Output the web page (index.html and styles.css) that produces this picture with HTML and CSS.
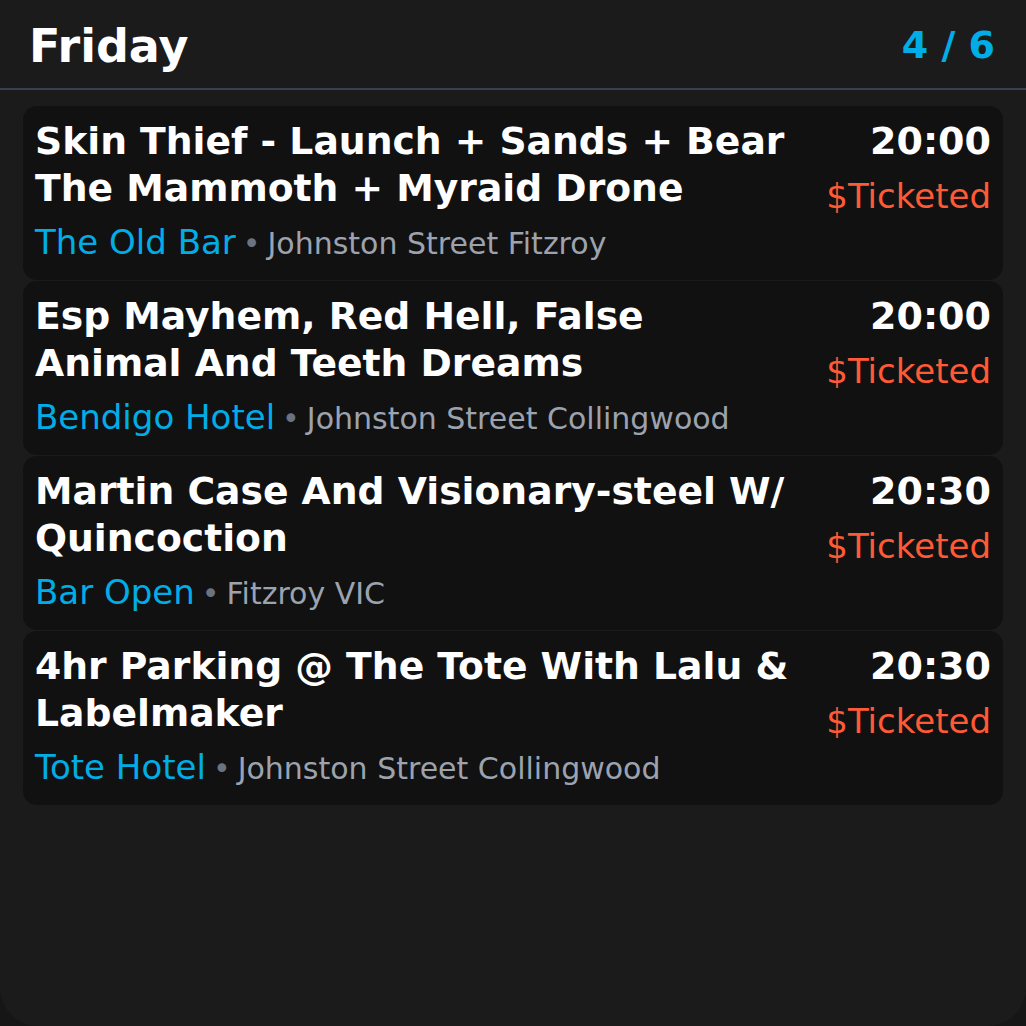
FILE: index.html
```html
<!DOCTYPE html>
<html>
<head>
<meta charset="utf-8">
<link rel="stylesheet" href="styles.css">
</head>
<body>
<div class="panel">
  <header class="header">
    <h1 class="day">Friday</h1>
    <div class="count">4 / 6</div>
  </header>
  <div class="list">
    <div class="card">
      <div class="main">
        <div class="title">Skin Thief - Launch + Sands + Bear The Mammoth + Myraid Drone</div>
        <div class="place"><span class="venue">The Old Bar</span><span class="dot">•</span><span class="addr">Johnston Street Fitzroy</span></div>
      </div>
      <div class="side">
        <div class="time">20:00</div>
        <div class="price">$Ticketed</div>
      </div>
    </div>
    <div class="card">
      <div class="main">
        <div class="title">Esp Mayhem, Red Hell, False Animal And Teeth Dreams</div>
        <div class="place"><span class="venue">Bendigo Hotel</span><span class="dot">•</span><span class="addr">Johnston Street Collingwood</span></div>
      </div>
      <div class="side">
        <div class="time">20:00</div>
        <div class="price">$Ticketed</div>
      </div>
    </div>
    <div class="card">
      <div class="main">
        <div class="title">Martin Case And Visionary-steel W/ Quincoction</div>
        <div class="place"><span class="venue">Bar Open</span><span class="dot">•</span><span class="addr">Fitzroy VIC</span></div>
      </div>
      <div class="side">
        <div class="time">20:30</div>
        <div class="price">$Ticketed</div>
      </div>
    </div>
    <div class="card">
      <div class="main">
        <div class="title">4hr Parking @ The Tote With Lalu &amp; Labelmaker</div>
        <div class="place"><span class="venue">Tote Hotel</span><span class="dot">•</span><span class="addr">Johnston Street Collingwood</span></div>
      </div>
      <div class="side">
        <div class="time">20:30</div>
        <div class="price">$Ticketed</div>
      </div>
    </div>
  </div>
</div>
</body>
</html>
```

FILE: styles.css
```css
html, body {
  margin: 0;
  padding: 0;
  background: #161616;
}
body {
  font-family: "DejaVu Sans", sans-serif;
  color: #ffffff;
}
.panel {
  width: 1026px;
  height: 1026px;
  box-sizing: border-box;
  background: #1b1b1b;
  border-radius: 0 0 38px 38px;
  overflow: hidden;
}
.header {
  display: flex;
  align-items: center;
  justify-content: space-between;
  padding: 18px 31px 13px 29px;
  border-bottom: 2px solid #374151;
}
.day {
  margin: 0;
  font-size: 46px;
  line-height: 57px;
  font-weight: bold;
  color: #ffffff;
}
.count {
  font-size: 38px;
  line-height: 47px;
  font-weight: bold;
  color: #00ade6;
  margin-bottom: 3px;
}
.list {
  display: flex;
  flex-direction: column;
  gap: 1px;
  padding: 16px 23px;
}
.card {
  display: flex;
  gap: 34px;
  background: #111111;
  border-radius: 14px;
  padding: 12px 12px 17px 12px;
}
.main {
  flex: 1;
  min-width: 0;
}
.title {
  font-size: 37.7px;
  line-height: 47px;
  font-weight: bold;
  color: #ffffff;
}
.place {
  margin-top: 9px;
  font-size: 34px;
  line-height: 42px;
  height: 42px;
  white-space: nowrap;
}
.venue {
  font-size: 34px;
  line-height: 1;
  color: #00ade6;
}
.dot {
  font-size: 30px;
  line-height: 1;
  color: #6b7280;
  margin: 0 7px;
}
.addr {
  font-size: 30px;
  line-height: 1;
  color: #9ca3af;
}
.side {
  flex-shrink: 0;
  text-align: right;
}
.time {
  font-size: 38px;
  line-height: 47px;
  font-weight: bold;
  color: #ffffff;
}
.price {
  margin-top: 10px;
  font-size: 34px;
  line-height: 42px;
  color: #ff5a36;
}
```
